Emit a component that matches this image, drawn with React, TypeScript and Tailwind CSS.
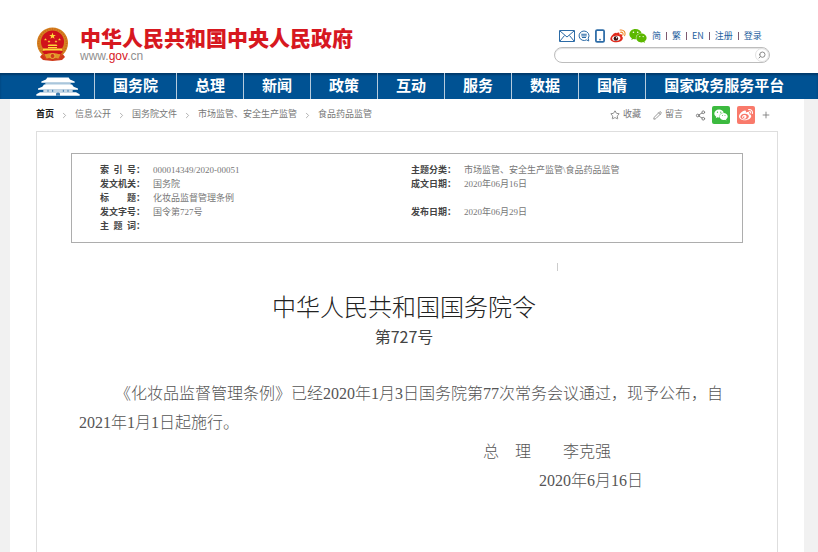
import React from 'react';
import { ChevronRight, Pencil, Plus, Search, Share2, Smartphone, Star } from 'lucide-react';
import { FaWeibo, FaWeixin } from 'react-icons/fa';

const NAV_ITEMS = ['国务院', '总理', '新闻', '政策', '互动', '服务', '数据', '国情', '国家政务服务平台'];

const TOP_LINKS = ['简', '繁', 'EN', '注册', '登录'];

const CRUMBS = ['首页', '信息公开', '国务院文件', '市场监管、安全生产监管', '食品药品监管'];

const INFO_ROWS = [
  ['索\u2002引\u2002号：', '000014349/2020-00051', '主题分类：', '市场监管、安全生产监管\\食品药品监管'],
  ['发文机关：', '国务院', '成文日期：', '2020年06月16日'],
  ['标\u3000\u3000题：', '化妆品监督管理条例', '', ''],
  ['发文字号：', '国令第727号', '发布日期：', '2020年06月29日'],
  ['主\u2002题\u2002词：', '', '', ''],
];

const STAR = 'M0 -1 L.24 -.32 L.95 -.31 L.38 .12 L.59 .81 L0 .4 L-.59 .81 L-.38 .12 L-.95 -.31 L-.24 -.32Z';

const Emblem = () => (
  <svg viewBox="0 0 66 70" className="h-[35px] w-[33px]" aria-hidden="true">
    <path d="M14 52 L8 60 L14 66 L33 68 L52 66 L58 60 L52 52Z" fill="#cf3a1a" />
    <circle cx="33" cy="32" r="31" fill="#d5811f" />
    <circle cx="33" cy="32" r="28" fill="none" stroke="#c9641c" strokeWidth="3" strokeDasharray="2 3" />
    <circle cx="33" cy="30" r="23" fill="#d0121b" />
    <g fill="#ffd93b">
      <path d={STAR} transform="translate(33 18) scale(7)" />
      <path d={STAR} transform="translate(19 25) scale(3)" />
      <path d={STAR} transform="translate(26 29) scale(3)" />
      <path d={STAR} transform="translate(40 29) scale(3)" />
      <path d={STAR} transform="translate(47 25) scale(3)" />
      <path d="M25 35 H41 L43 38 H23Z M24 40 H42 V42 H24Z M14 43 H52 V47 H14Z" />
    </g>
    <path d="M12 48 H54 L50 54 H16Z" fill="#d0121b" />
    <path d="M16 56 Q33 48 50 56 L47 64 Q33 58 19 64Z" fill="#e09528" />
    <circle cx="33" cy="58" r="5" fill="#cf3a1a" stroke="#edb03a" strokeWidth="2" />
    <path d="M15 54 L21 66 M51 54 L45 66" stroke="#d63c20" strokeWidth="3" />
  </svg>
);

const GateIcon = () => (
  <svg viewBox="0 0 132 56" className="h-[19px] w-11" fill="#fff" aria-hidden="true">
    <path d="M34 1 H98 L102 7 L116 13 V17 H16 V13 L30 7Z" />
    <path d="M28 17 H104 V24 H28Z" fill="#a9c6dc" />
    <path d="M24 22 H108 L113 29 L126 34 V38 H6 V34 L19 29Z" />
    <path d="M22 38 H110 V45 H22Z" fill="#c2d6e6" />
    <path d="M36 38 V44 M50 38 V44 M82 38 V44 M96 38 V44" stroke="#3c7aad" strokeWidth="3" />
    <path d="M12 45 H120 L131 51 V56 H1 V51Z" />
    <path d="M60 56 V49 Q66 43 72 49 V56Z" fill="#3c7aad" />
  </svg>
);

const MailIcon = () => (
  <svg viewBox="0 0 16 12" className="h-3 w-4" fill="none" stroke="#2c6ba6" aria-hidden="true">
    <path d="M.5 .5 H15.5 V11.5 H.5Z" />
    <path d="M1 1 L8 7 L15 1 M1 11 L5.500 5.500 M15 11 L10.500 5.500" />
  </svg>
);

const ChatIcon = () => (
  <svg viewBox="0 0 24 24" className="h-3 w-3" fill="none" stroke="#2c6ba6" strokeWidth="2" aria-hidden="true">
    <path d="M12 2 a10 9.5 0 1 0 5 17.8 L21.500 22 L20.500 16.500 A10 9.500 0 0 0 12 2Z" />
    <path d="M6.500 8.500 H17.500 M6.500 11.800 H17.500 M8 15 H16" />
  </svg>
);

// red body with orange signal waves
const WeiboIcon = () => (
  <svg viewBox="0 0 46 40" className="h-[14px] w-4" aria-hidden="true">
    <path d="M19 12 C23 9 29 9 27 16 C33 13 38 17 34 21 C41 25 36 38 19 38 C6 38 0 32 1 27 C3 19 14 9 18 11Z" fill="#e02a1c" />
    <ellipse cx="18" cy="27" rx="12" ry="7.500" fill="#fff" transform="rotate(-8 18 27)" />
    <circle cx="17" cy="27" r="6.500" fill="#3a1515" />
    <circle cx="19" cy="25" r="2" fill="#fff" />
    <path d="M29 3 C40 1 46 10 42 19 M30 9 C36 8 39 13 37 17" fill="none" stroke="#f08a2a" strokeWidth="3" strokeLinecap="round" />
  </svg>
);

const Header = () => (
  <header className="flex h-[73px] items-start justify-between bg-white pr-12 pl-9">
    <a href="#home" className="flex items-start gap-[11px] pt-[25px]">
      <span className="pt-[2px]">
        <Emblem />
      </span>
      <span className="flex flex-col">
        <span className="text-[21px] leading-6 font-black text-[#d7181f]">中华人民共和国中央人民政府</span>
        <span className="font-['Liberation_Sans',sans-serif] text-[12px] leading-[14px] text-[#909090]">
          www.<b className="font-normal text-[#d7181f]">gov</b>.cn
        </span>
      </span>
    </a>

    <div className="flex w-[216px] flex-col gap-1 pt-7">
      <div className="flex h-[15px] items-center pl-[5px] text-[9px] whitespace-nowrap text-[#1f5f9e]">
        <div className="flex items-center gap-[3px]">
          <MailIcon />
          <ChatIcon />
          <Smartphone size={14} strokeWidth={3} className="text-[#2c6ba6]" />
          <WeiboIcon />
          <FaWeixin size={18} className="text-[#5cb800]" />
        </div>
        <div className="flex items-center pl-[5px]">
          {TOP_LINKS.map((label, i) => (
            <React.Fragment key={label}>
              {i > 0 && <span className="mx-[5px] h-2 w-px bg-[#7d5a70]" />}
              <a href="#top">{label}</a>
            </React.Fragment>
          ))}
        </div>
      </div>
      <form className="flex h-4 items-center rounded-full border border-[#bdbdbd] pl-2 shadow-[inset_0_1px_1px_#e2e2e2]">
        <input type="text" aria-label="搜索" className="min-w-0 flex-1 bg-transparent text-[9px] outline-none" />
        <button type="button" aria-label="提交搜索" className="flex h-[14px] w-[14px] items-center justify-center rounded-full border border-[#e2e2e2]">
          <Search size={8} strokeWidth={3} className="-scale-x-100 text-[#8a8a8a]" />
        </button>
      </form>
    </div>
  </header>
);

const NavBar = () => (
  <nav className="flex h-[26px] bg-[#005293] pl-9 text-[15px] leading-6 font-bold text-white shadow-[inset_0_2px_2px_#003a6b]">
    <a href="#home" aria-label="首页" className="flex items-center pr-[14px]">
      <GateIcon />
    </a>
    {NAV_ITEMS.map((item) => (
      <a key={item} href="#nav" className="border-l border-[#b5cbdd] px-[18px] whitespace-nowrap">
        {item}
      </a>
    ))}
  </nav>
);

const ShareBar = () => (
  <div className="flex items-center pr-[7px] text-[9px] text-[#777]">
    <button className="flex items-center gap-[3px]">
      <Star size={10} />
      收藏
    </button>
    <button className="ml-3 flex items-center gap-[3px]">
      <Pencil size={9} />
      留言
    </button>
    <button aria-label="分享" className="ml-3">
      <Share2 size={11} />
    </button>
    <button aria-label="微信" className="ml-[6px] flex h-[18px] w-[18px] items-center justify-center rounded-xs bg-[#3cba3f] text-white">
      <FaWeixin size={14} />
    </button>
    <button aria-label="微博" className="ml-[7px] flex h-[18px] w-[18px] items-center justify-center rounded-xs bg-[#f97a6b] text-white">
      <FaWeibo size={14} />
    </button>
    <button aria-label="更多" className="ml-[6px]">
      <Plus size={10} strokeWidth={2} />
    </button>
  </div>
);

const InfoTable = () => (
  <div className="mx-[34px] mt-[21px] border border-[#adadad] pt-[9px] pr-4 pb-[9px] pl-7">
    <table className="w-full table-fixed text-left text-[9px] leading-[14px]">
      <colgroup>
        <col className="w-[53px]" />
        <col className="w-[258px]" />
        <col className="w-[53px]" />
        <col />
      </colgroup>
      <tbody>
        {INFO_ROWS.map((row) => (
          <tr key={row[0]} className="h-[14px]">
            <th scope="row" className="font-bold whitespace-nowrap text-[#444]">{row[0]}</th>
            <td className="text-[#777]">{row[1]}</td>
            <th scope="row" className="font-bold whitespace-nowrap text-[#444]">{row[2]}</th>
            <td className="text-[#777]">{row[3]}</td>
          </tr>
        ))}
      </tbody>
    </table>
  </div>
);

const Article = () => (
  <article className="pr-12 pl-[42px] text-[#555]">
    <div className="mt-5 ml-[478px] h-2 w-px bg-[#ccc]" />
    <h1 className="mt-5 text-center text-[24px] leading-[34px] font-light text-[#222]">中华人民共和国国务院令</h1>
    <p className="text-center font-['Noto_Sans_CJK_SC',sans-serif] text-[16px] leading-[22px] text-[#444]">第727号</p>
    <div className="mt-8 text-[16px] leading-[29px] font-light">
      <p className="indent-9">
        《化妆品监督管理条例》已经2020年1月3日国务院第77次常务会议通过，现予公布，自2021年1月1日起施行。
      </p>
      <p className="pr-[118px] text-right">总　理　　李克强</p>
      <p className="pr-[86px] text-right">2020年6月16日</p>
    </div>
  </article>
);

const App: React.FC = () => (
  <div lang="zh-CN" className="flex min-h-screen flex-col bg-[#f1f1f1] font-['Noto_Sans_CJK_SC',sans-serif]">
    <Header />
    <NavBar />

    <main className="mr-[14px] ml-[10px] flex flex-1 flex-col bg-white px-[26px] font-['Liberation_Serif','Noto_Sans_CJK_SC',serif]">
      <div className="flex h-8 items-center justify-between">
        <div className="flex items-center text-[9px] text-[#777]">
          {CRUMBS.map((crumb, i) => (
            <React.Fragment key={crumb}>
              {i > 0 && <ChevronRight size={9} className="mx-[6px] text-[#999]" />}
              <a href="#crumb" className={i === 0 ? 'font-bold text-[#222]' : ''}>{crumb}</a>
            </React.Fragment>
          ))}
        </div>
        <ShareBar />
      </div>

      <section className="flex-1 border border-b-0 border-[#dedede]">
        <InfoTable />
        <Article />
      </section>
    </main>
  </div>
);

export default App;
